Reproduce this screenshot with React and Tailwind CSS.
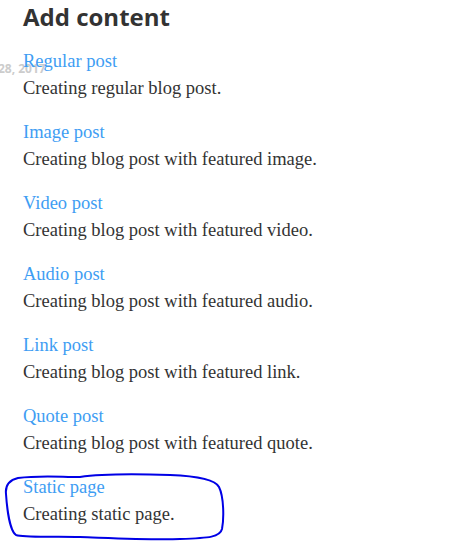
import React from "react";

const items = [
  { title: "Regular post", text: "Creating regular blog post." },
  { title: "Image post", text: "Creating blog post with featured image." },
  { title: "Video post", text: "Creating blog post with featured video." },
  { title: "Audio post", text: "Creating blog post with featured audio." },
  { title: "Link post", text: "Creating blog post with featured link." },
  { title: "Quote post", text: "Creating blog post with featured quote." },
  { title: "Static page", text: "Creating static page." },
];

const App = () => {
  return (
    <div className="relative w-[456px] h-[557px] bg-white overflow-hidden">
      {/* date text peeking out from behind */}
      <span className="absolute left-[-2px] top-[60px] text-[12px] font-bold text-[#cccccc] font-['Open_Sans',sans-serif]">
        28, 2017
      </span>

      <div className="relative pl-[23px] pt-0">
        <h2 className="text-[24px] leading-[34px] font-bold text-[#333333] font-['Open_Sans',sans-serif]">
          Add content
        </h2>
        <ul className="mt-[14px] font-['Liberation_Serif',serif] text-[18.5px] leading-[27px]">
          {items.map((item) => (
            <li key={item.title} className="mb-[17px]">
              <a href="#" className="block text-[#3e9df3]">
                {item.title}
              </a>
              <p className="text-[#333333]">{item.text}</p>
            </li>
          ))}
        </ul>
      </div>

      {/* hand drawn marker around the last item */}
      <svg className="absolute left-0 top-[469px]" width="240" height="80" viewBox="0 0 240 80">
        <path
          d="M18 9 C40 6 60 8 80 8 C100 5 140 5 170 6 C195 7 215 10 219 18 C224 28 224 50 222 60 C220 68 210 69 180 70 C150 71 110 69 80 68 C55 67 25 69 16 66 C10 62 7 40 6 25 C5 16 10 11 18 9 Z"
          fill="none"
          stroke="#0000e6"
          strokeWidth="2"
        />
      </svg>
    </div>
  );
};

export default App;
